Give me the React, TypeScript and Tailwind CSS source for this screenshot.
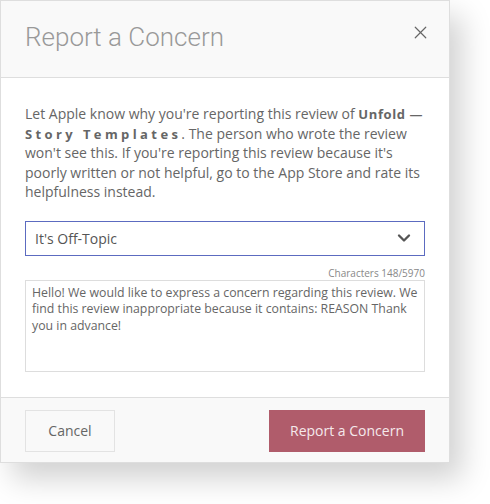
import { X, ChevronDown } from 'lucide-react';

const message =
  'Hello! We would like to express a concern regarding this review. We find this review inappropriate because it contains: REASON Thank you in advance!';

export default function App() {
  return (
    <div className="w-[490px] h-[504px] bg-white">
      <div className="w-[450px] border border-[#dedede] bg-white shadow-[12px_16px_28px_rgba(0,0,0,0.18)] font-['Open_Sans',sans-serif]">
        {/* Header */}
        <div className="h-[77px] bg-[#f9f9f9] border-b border-[#dedede] flex items-start justify-between pl-[24px] pr-[18px]">
          <h2 className="mt-[19px] text-[26px] leading-[34px] font-light text-[#999] font-['Roboto',sans-serif]">
            Report a Concern
          </h2>
          <button className="mt-[21px] text-[#666]">
            <X className="w-[21px] h-[21px]" strokeWidth={1.35} />
          </button>
        </div>

        {/* Body */}
        <div className="px-[24px] pt-[26px] pb-[25px]">
          <p className="text-[14px] leading-[19.6px] text-[#666]">
            Let Apple know why you're reporting this review of{' '}
            <b className="font-bold text-[13px] leading-[14px] tracking-[0.6px]">Unfold —</b>{' '}
            <b className="font-bold text-[13px] leading-[14px] tracking-[3.4px]">Story Templates</b>. The person who
            wrote the review won't see this. If you're reporting this review because it's poorly written or not
            helpful, go to the App Store and rate its helpfulness instead.
          </p>

          <div className="mt-[19px] h-[35px] border border-[#5c6bc0] flex items-center justify-between pl-[9px] pr-[10px]">
            <span className="text-[14px] text-[#555]">It's Off-Topic</span>
            <ChevronDown className="w-[20px] h-[20px] text-[#555]" strokeWidth={2.8} />
          </div>

          <div className="mt-[11px] text-right text-[10px] leading-[12px] text-[#888]">Characters 148/5970</div>

          <textarea
            readOnly
            defaultValue={message}
            className="mt-[1px] block w-full h-[92px] resize-none border border-[#ddd] px-[6px] pt-[4px] text-[12.3px] leading-[16.5px] text-[#666] outline-none font-['Open_Sans',sans-serif]"
          />
        </div>

        {/* Footer */}
        <div className="bg-[#f9f9f9] border-t border-[#dedede] flex items-center justify-between px-[24px] pt-[12px] pb-[10px]">
          <button className="w-[90px] h-[42px] border border-[#e3e3e3] bg-[#f9f9f9] text-[14px] text-[#666]">
            Cancel
          </button>
          <button className="w-[156px] h-[42px] bg-[#b05c6b] text-[14px] text-[#f5e9eb]">Report a Concern</button>
        </div>
      </div>
    </div>
  );
}
